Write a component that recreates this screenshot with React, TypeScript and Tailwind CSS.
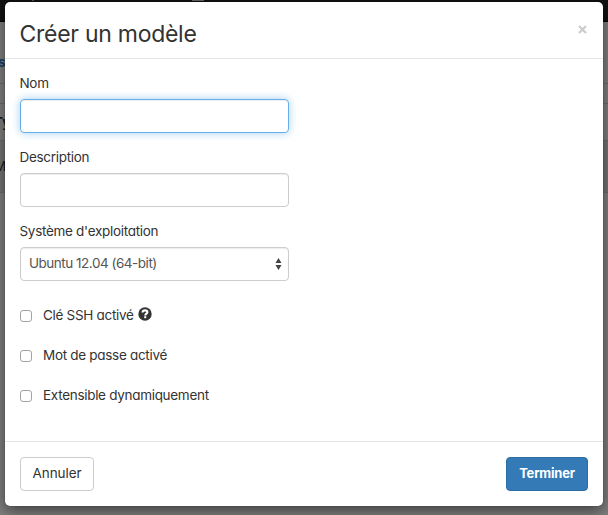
import type { ReactNode } from 'react';

function Label({ children }: { children: ReactNode }) {
  return (
    <div className="mb-[6px] h-5 whitespace-nowrap leading-5 -mt-px -ml-[0.5px]">
      <span className="tracking-[-0.3px]">{children}</span>
    </div>
  );
}

function CheckRow({ children }: { children: ReactNode }) {
  return (
    <label className="flex h-5 items-center whitespace-nowrap tracking-[-0.3px]">
      <span className="mt-0.5 mr-[11px] size-3 shrink-0 rounded-[3px] border border-[#a3a3a3] bg-white" />
      {children}
    </label>
  );
}

function HelpIcon() {
  return (
    <svg className="ml-1 -mt-[3px] size-[14px]" viewBox="0 0 14 14">
      <circle cx="7" cy="7" r="6.7" fill="#333" />
      <path d="M4.5 5.5C4.6 3.8 5.7 3.4 7.1 3.4c1.4 0 2.3.7 2.3 1.8 0 1.5-2.1 1.5-2.1 3.2" fill="none" stroke="#fff" strokeWidth="2.1" />
      <path d="M6.2 9.2h2.1v2H6.200z" fill="#fff" />
    </svg>
  );
}

function Backdrop() {
  return (
    <div className="flex h-full flex-col overflow-hidden bg-[#7f7f7f] font-bold text-[#1a1a1a]">
      <div className="flex h-[22px] shrink-0 border-b border-black bg-[#111]">
        <span className="ml-8 h-px w-0.5 bg-[#555]" />
        <span className="ml-[158px] h-px w-3 bg-[#666]" />
      </div>
      <div className="flex h-[61px] shrink-0 items-center pt-[19px] leading-5 text-[#194266]">
        <span className="-ml-[2px]">s</span>
      </div>
      <div className="h-5 shrink-0 border-t border-[#6d6d6d]" />
      <div className="flex h-[37px] shrink-0 items-center border-t border-[#6d6d6d]">
        <span className="-ml-[6px]">Ty</span>
      </div>
      <div className="flex h-[53px] shrink-0 items-center border-y border-[#6d6d6d] bg-[#747474] font-normal">
        <span className="-ml-[6px]">M</span>
      </div>
    </div>
  );
}

export default function App() {
  return (
    <div className="relative h-[515px] w-[608px] overflow-hidden text-[13.5px] text-[#333] [font-family:Inter,'Liberation_Sans',sans-serif] [font-feature-settings:'cv11']">
      <Backdrop />
      <div className="absolute top-[2px] left-[5px] flex h-[504px] w-[598px] flex-col rounded-[5px] bg-white shadow-[0_5px_15px_rgba(0,0,0,0.5),0_0_1px_rgba(0,0,0,0.5)]">
        <header className="flex h-[57px] shrink-0 justify-between border-b border-[#e5e5e5] px-[15px]">
          <h1 className="mt-4 -ml-[0.5px] whitespace-nowrap text-[23px] leading-[32px] tracking-[-0.27px]">Créer un modèle</h1>
          <button className="mt-[17px] h-5 text-[#ccc]">
            <svg className="mr-[1px] size-[9px]" viewBox="0 0 9 9" aria-label="Fermer">
              <path d="M1 1l7 7M8 1L1 8" stroke="currentColor" strokeWidth="2.2" />
            </svg>
          </button>
        </header>
        <main className="flex-1 px-[15px] pt-[15px]">
          <div className="mb-[15px]">
            <Label>Nom</Label>
            <div className="h-[34px] w-[269px] rounded-[4px] border border-[#66afe9] shadow-[inset_0_1px_1px_rgba(0,0,0,0.075),0_0_8px_rgba(102,175,233,0.6)]" />
          </div>
          <div className="mb-[15px]">
            <Label>Description</Label>
            <div className="h-[34px] w-[269px] rounded-[4px] border border-[#ccc] shadow-[inset_0_1px_1px_rgba(0,0,0,0.075)]" />
          </div>
          <div className="mb-6">
            <Label>Système d'exploitation</Label>
            <div className="flex h-[34px] w-[269px] items-center justify-between rounded-[4px] border border-[#ccc] pr-[6px] pl-2 text-[#555] shadow-[inset_0_1px_1px_rgba(0,0,0,0.075)]">
              <span className="-mt-px whitespace-nowrap tracking-[-0.48px]">Ubuntu 12.04 (64-bit)</span>
              <svg className="h-3 w-[7px]" viewBox="0 0 7 12">
                <path d="M3.5 0L6.5 5h-6zM.5 7h6l-3 5z" fill="#444" />
              </svg>
            </div>
          </div>
          <div className="flex flex-col gap-5">
            <CheckRow>
              <span>Clé SSH activé</span>
              <HelpIcon />
            </CheckRow>
            <CheckRow><span>Mot de passe activé</span></CheckRow>
            <CheckRow><span>Extensible dynamiquement</span></CheckRow>
          </div>
        </main>
        <footer className="flex h-[65px] shrink-0 justify-between border-t border-[#e5e5e5] p-[15px]">
          <button className="h-[34px] w-[74px] rounded-[4px] border border-[#ccc] bg-white pb-px tracking-[-0.1px]">Annuler</button>
          <button className="h-[34px] w-[82px] rounded-[4px] border border-[#2e6da4] bg-[#337ab7] text-[13px] font-bold tracking-[-0.2px] text-white">Terminer</button>
        </footer>
      </div>
    </div>
  );
}
